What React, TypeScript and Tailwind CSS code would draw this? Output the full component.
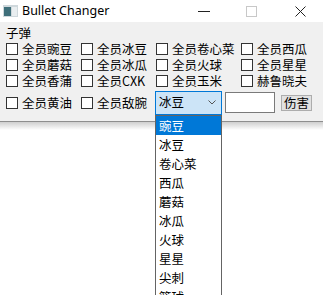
import React from 'react';

const cjk = "font-['Microsoft_YaHei','Noto_Sans_CJK_SC',sans-serif]";

const rows: string[][] = [
  ['全员豌豆', '全员冰豆', '全员卷心菜', '全员西瓜'],
  ['全员蘑菇', '全员冰瓜', '全员火球', '全员星星'],
  ['全员香蒲', '全员CXK', '全员玉米', '赫鲁晓夫'],
];

const bullets = ['豌豆', '冰豆', '卷心菜', '西瓜', '蘑菇', '冰瓜', '火球', '星星', '尖刺', '篮球', '仙人掌'];

function Check({ label }: { label: string }) {
  return (
    <div className="flex items-center h-[16px]">
      <span className="w-[12px] h-[12px] border border-[#333] bg-white shrink-0" />
      <span className="ml-[4px] text-[12.5px] leading-[16px] text-black whitespace-nowrap">{label}</span>
    </div>
  );
}

export default function App() {
  return (
    <div className={`relative w-[323px] h-[295px] bg-white overflow-hidden ${cjk}`}>
      {/* title bar */}
      <div className="h-[22px] bg-white flex items-center">
        <svg className="ml-[3px] w-[15px] h-[12px]" viewBox="0 0 15 12">
          <rect x="0" y="0" width="15" height="12" fill="#cfd8dc" />
          <rect x="1" y="2" width="7" height="9" fill="#3f6f7a" />
          <rect x="9" y="2" width="5" height="9" fill="#e9eef0" />
        </svg>
        <span className="ml-[4px] text-[12.5px] text-black font-['Noto_Sans',sans-serif] leading-none">Bullet Changer</span>
        <div className="ml-auto flex items-center h-full">
          <svg className="w-[12px] h-[12px] mr-[36px]" viewBox="0 0 12 12">
            <line x1="0" y1="6.5" x2="12" y2="6.5" stroke="#222" strokeWidth="1" />
          </svg>
          <svg className="w-[11px] h-[11px] mr-[38px]" viewBox="0 0 11 11">
            <rect x="0.5" y="0.5" width="10" height="10" fill="none" stroke="#c8c8c8" strokeWidth="1" />
          </svg>
          <svg className="w-[11px] h-[11px] mr-[17px]" viewBox="0 0 11 11">
            <path d="M0.5 0.5 L10.5 10.5 M10.5 0.5 L0.5 10.5" stroke="#222" strokeWidth="1" />
          </svg>
        </div>
      </div>

      {/* client area */}
      <div className="h-[100px] bg-[#f0f0f0] border-b border-[#8e8e8e] px-[6px]">
        <div className="pt-[3px] text-[12.5px] leading-[16px] text-black">子弹</div>
        <div className="grid grid-cols-[75px_75px_85px_1fr]">
          {rows.map((r, i) =>
            r.map((l, j) => <Check key={`${i}-${j}`} label={l} />)
          )}
        </div>
        <div className="flex items-center h-[25px] mt-[1px]">
          <div className="w-[75px]"><Check label="全员黄油" /></div>
          <div className="w-[74px]"><Check label="全员敌腕" /></div>
          <div className="w-[67px] h-[24px] border border-[#0078d7] bg-[#cce4f7] flex items-center pl-[3px] pr-[5px]">
            <span className="text-[12.5px] text-black">冰豆</span>
            <svg className="ml-auto w-[8px] h-[5px]" viewBox="0 0 8 5">
              <path d="M0.5 0.5 L4 4 L7.5 0.5" fill="none" stroke="#555" strokeWidth="1" />
            </svg>
          </div>
          <div className="ml-[3px] w-[50px] h-[21px] border border-[#7a7a7a] bg-white" />
          <button className="ml-[6px] w-[31px] h-[16px] border border-[#adadad] bg-[#e1e1e1] text-[12.5px] leading-[14px] text-black flex items-center justify-center">
            伤害
          </button>
        </div>
      </div>
      <div className="h-[8px] bg-gradient-to-b from-[#cfcfcf] to-white" />

      {/* open dropdown */}
      <div className="absolute left-[155px] top-[115px] w-[67px] border border-[#646464] bg-white">
        {bullets.map((b, i) => (
          <div
            key={b}
            className={`h-[19px] pl-[3px] text-[12.5px] leading-[19px] ${i === 0 ? 'bg-[#0078d7] text-white' : 'text-black'}`}
          >
            {b}
          </div>
        ))}
      </div>
    </div>
  );
}
